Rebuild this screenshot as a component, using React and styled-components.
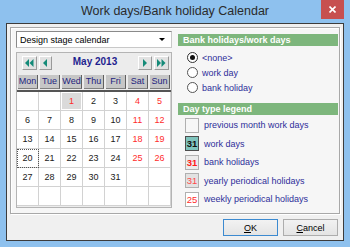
import React from "react";
import styled, { createGlobalStyle } from "styled-components";

const Global = createGlobalStyle`
  html, body { margin: 0; padding: 0; }
  body { background: #8ec1ee; font-family: "Liberation Sans", Arial, sans-serif; }
`;

const RED = "#ff2b2b";
const NAVY = "#2e2e9a";

const Window = styled.div`
  width: 350px;
  height: 247px;
  box-sizing: border-box;
  background: #8ec1ee;
  padding: 0 6px 6px 6px;
  display: flex;
  flex-direction: column;
  overflow: hidden;
`;

const TitleBar = styled.div`
  height: 23px;
  display: grid;
  grid-template-columns: 1fr auto 1fr;
  align-items: start;
`;

const Title = styled.div`
  grid-column: 2;
  font-size: 12.5px;
  line-height: 23px;
  color: #2b2b2b;
  white-space: nowrap;
`;

const CloseButton = styled.div`
  grid-column: 3;
  justify-self: end;
  width: 23px;
  height: 19px;
  background: #c75050;
  display: flex;
  align-items: center;
  justify-content: center;
`;

const Client = styled.div`
  flex: 1;
  border: 1px solid #3c3c3c;
  background: #f0f0f0;
  padding: 3px 3px 0 3px;
  display: flex;
  flex-direction: column;
`;

const Panel = styled.div`
  height: 187px;
  box-sizing: border-box;
  border: 1px solid #a8a8a8;
  box-shadow: inset 1px 1px 0 #fff, 1px 1px 0 #fff;
  background: #f6f6f6;
  padding: 3px 1px 0 5px;
  display: grid;
  grid-template-columns: 156px 160px;
  column-gap: 6px;
  align-items: start;
`;

const LeftColumn = styled.div`
  display: flex;
  flex-direction: column;
  gap: 4px;
`;

const Combo = styled.div`
  height: 17px;
  box-sizing: border-box;
  border: 1px solid #8a8a8a;
  border-right-color: #c8c8c8;
  border-bottom-color: #c8c8c8;
  background: #fff;
  display: flex;
  align-items: center;
  justify-content: space-between;
  padding: 0 6px 0 3px;
  font-size: 9px;
  color: #000;
`;

const ComboArrow = styled.span`
  width: 0;
  height: 0;
  border-left: 3px solid transparent;
  border-right: 3px solid transparent;
  border-top: 3px solid #000;
`;

const Calendar = styled.div`
  height: 156px;
  box-sizing: border-box;
  border: 1px solid #b4b4b4;
  background: #ececec;
  display: flex;
  flex-direction: column;
`;

const NavRow = styled.div`
  height: 20px;
  box-sizing: border-box;
  padding: 3px 2px 0 5px;
  display: grid;
  grid-template-columns: 15px 13px 1fr 14px 15px;
  column-gap: 2px;
  align-items: start;
`;

const NavButton = styled.div`
  height: 14px;
  box-sizing: border-box;
  border: 1px solid #fff;
  border-right-color: #9a9a9a;
  border-bottom-color: #9a9a9a;
  background: #e2e2e2;
  display: flex;
  align-items: center;
  justify-content: center;
`;

const MonthLabel = styled.div`
  text-align: center;
  font-size: 10px;
  font-weight: bold;
  color: #1f1f8f;
  line-height: 12px;
`;

const HeaderRow = styled.div`
  margin-top: 1px;
  padding: 1px 0 1px 1px;
  display: grid;
  grid-template-columns: repeat(7, 22px);
  border-bottom: 2px solid #555;
`;

const HeaderCell = styled.div`
  height: 14px;
  box-sizing: border-box;
  margin-right: 2px;
  border-right: 1px solid #606060;
  border-bottom: 1px solid #808080;
  background: #c6c6c6;
  color: #1f1f80;
  font-size: 9px;
  line-height: 13px;
  text-align: center;
`;

const DayGrid = styled.div`
  display: grid;
  grid-template-columns: repeat(7, 22px);
  grid-auto-rows: 19px;
  background: #fff;
`;

const DayCell = styled.div`
  box-sizing: border-box;
  border-right: 1px solid #d2d2d2;
  border-bottom: 1px solid #d2d2d2;
  display: flex;
  align-items: center;
  justify-content: center;
  font-size: 9px;
  color: ${(p) => (p.$red ? RED : "#1a1a1a")};
  background: #fff;
  ${(p) => p.$yearly && "box-shadow: inset 0 0 0 1px #fff; background: #dadada;"}
  ${(p) => p.$focus && "outline: 1px dotted #555; outline-offset: -1px;"}
`;

const RightColumn = styled.div`
  display: flex;
  flex-direction: column;
  padding-top: 3px;
`;

const GroupHeader = styled.div`
  height: 12px;
  background: #7db67c;
  color: #fff;
  font-size: 9px;
  font-weight: bold;
  line-height: 12px;
  padding-left: 5px;
`;

const RadioList = styled.div`
  display: flex;
  flex-direction: column;
  padding: 4px 0 8px 9px;
`;

const RadioRow = styled.div`
  height: 15px;
  display: flex;
  align-items: center;
  gap: 4px;
  font-size: 9px;
  color: ${NAVY};
`;

const RadioDot = styled.span`
  width: 11px;
  height: 11px;
  box-sizing: border-box;
  border-radius: 50%;
  border: 1px solid ${(p) => (p.$checked ? "#333" : "#555")};
  background: #fff;
  display: flex;
  align-items: center;
  justify-content: center;
  &::after {
    content: "";
    width: 5px;
    height: 5px;
    border-radius: 50%;
    background: ${(p) => (p.$checked ? "#111" : "transparent")};
  }
`;

const LegendList = styled.div`
  display: flex;
  flex-direction: column;
  gap: 4.5px;
  padding: 3px 0 0 7px;
`;

const LegendRow = styled.div`
  height: 14px;
  display: flex;
  align-items: center;
  gap: 5px;
  font-size: 9px;
  color: ${NAVY};
`;

const LegendBox = styled.span`
  width: 14px;
  height: 15px;
  box-sizing: border-box;
  border: 1px solid #b0b0b0;
  display: flex;
  align-items: center;
  justify-content: center;
  font-size: 9.5px;
  background: ${(p) => p.$bg};
  color: ${(p) => p.$color};
  font-weight: ${(p) => (p.$bold ? "bold" : "normal")};
  border-color: ${(p) => p.$border || "#b0b0b0"};
`;

const ButtonRow = styled.div`
  display: flex;
  justify-content: flex-end;
  gap: 5px;
  padding: 5px 2px 0 0;
`;

const Button = styled.div`
  width: 55px;
  height: 17px;
  box-sizing: border-box;
  border: 1px solid ${(p) => (p.$default ? "#3c8ad0" : "#adadad")};
  background: linear-gradient(#f2f2f2, #e4e4e4);
  display: flex;
  align-items: center;
  justify-content: center;
  font-size: 9px;
  color: #000;
  u { text-decoration: underline; }
`;

const Tri = ({ dir = "left", x = 0 }) =>
  dir === "left" ? (
    <polygon points={`${x + 4},0 ${x + 4},8 ${x},4`} fill="#148a78" />
  ) : (
    <polygon points={`${x},0 ${x},8 ${x + 4},4`} fill="#148a78" />
  );

const Arrows = ({ dir, count }) => (
  <svg width={count === 2 ? 9 : 5} height="8" viewBox={`0 0 ${count === 2 ? 9 : 5} 8`}>
    <Tri dir={dir} x={0} />
    {count === 2 && <Tri dir={dir} x={4.5} />}
  </svg>
);

const days = ["Mon", "Tue", "Wed", "Thu", "Fri", "Sat", "Sun"];

const cells = [];
for (let i = 0; i < 42; i++) {
  const d = i - 1;
  cells.push(d >= 1 && d <= 31 ? d : null);
}

const legend = [
  { label: "previous month work days", bg: "#f7f7f7", text: "" },
  { label: "work days", bg: "#7fc4bd", text: "31", color: "#111", bold: true, border: "#4d4d4d" },
  { label: "bank holidays", bg: "#ebebeb", text: "31", color: "#ff1a1a", bold: true },
  { label: "yearly periodical holidays", bg: "#e2e2e2", text: "31", color: "#ff4a4a" },
  { label: "weekly periodical holidays", bg: "#fff", text: "25", color: RED },
];

export default function App() {
  return (
    <Window>
      <Global />
      <TitleBar>
        <Title>Work days/Bank holiday Calendar</Title>
        <CloseButton>
          <svg width="7" height="7" viewBox="0 0 7 7">
            <path d="M0.5 0.5L6.5 6.5M6.5 0.5L0.5 6.5" stroke="#fff" strokeWidth="1.6" />
          </svg>
        </CloseButton>
      </TitleBar>
      <Client>
        <Panel>
          <LeftColumn>
            <Combo>
              <span>Design stage calendar</span>
              <ComboArrow />
            </Combo>
            <Calendar>
              <NavRow>
                <NavButton><Arrows dir="left" count={2} /></NavButton>
                <NavButton><Arrows dir="left" count={1} /></NavButton>
                <MonthLabel>May 2013</MonthLabel>
                <NavButton><Arrows dir="right" count={1} /></NavButton>
                <NavButton><Arrows dir="right" count={2} /></NavButton>
              </NavRow>
              <HeaderRow>
                {days.map((d) => (
                  <HeaderCell key={d}>{d}</HeaderCell>
                ))}
              </HeaderRow>
              <DayGrid>
                {cells.map((d, i) => (
                  <DayCell
                    key={i}
                    $red={d && (i % 7 >= 5 || d === 1)}
                    $yearly={d === 1}
                    $focus={d === 20}
                  >
                    {d || ""}
                  </DayCell>
                ))}
              </DayGrid>
            </Calendar>
          </LeftColumn>
          <RightColumn>
            <GroupHeader>Bank holidays/work days</GroupHeader>
            <RadioList>
              <RadioRow><RadioDot $checked />&lt;none&gt;</RadioRow>
              <RadioRow><RadioDot />work day</RadioRow>
              <RadioRow><RadioDot />bank holiday</RadioRow>
            </RadioList>
            <GroupHeader>Day type legend</GroupHeader>
            <LegendList>
              {legend.map((l) => (
                <LegendRow key={l.label}>
                  <LegendBox $bg={l.bg} $color={l.color} $bold={l.bold} $border={l.border}>
                    {l.text}
                  </LegendBox>
                  {l.label}
                </LegendRow>
              ))}
            </LegendList>
          </RightColumn>
        </Panel>
        <ButtonRow>
          <Button $default><span><u>O</u>K</span></Button>
          <Button><span><u>C</u>ancel</span></Button>
        </ButtonRow>
      </Client>
    </Window>
  );
}
